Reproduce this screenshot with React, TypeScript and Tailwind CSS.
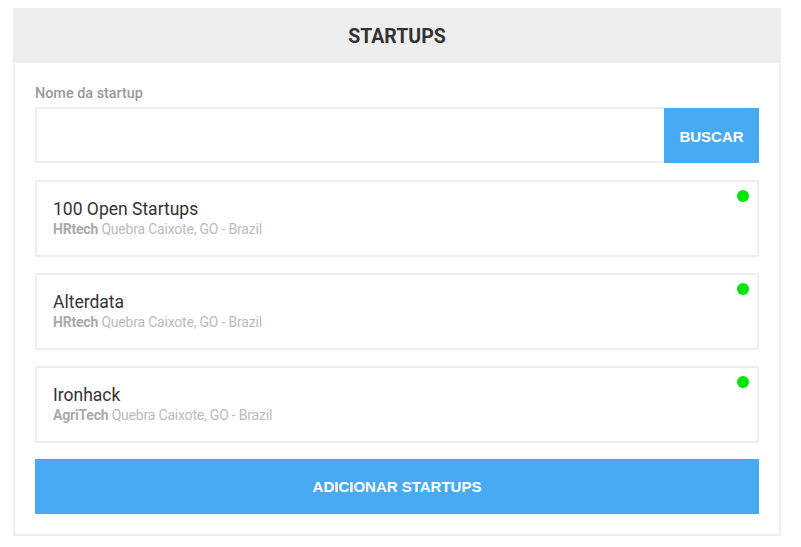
import React from "react";

const items = [
  { name: "100 Open Startups", tag: "HRtech", place: "Quebra Caixote, GO - Brazil" },
  { name: "Alterdata", tag: "HRtech", place: "Quebra Caixote, GO - Brazil" },
  { name: "Ironhack", tag: "AgriTech", place: "Quebra Caixote, GO - Brazil" },
];

export default function App() {
  return (
    <div className="w-[801px] h-[547px] bg-white pt-2 pl-[13px]" style={{ fontFamily: "Roboto, sans-serif" }}>
      <div className="w-[768px] h-[528px] border-2 border-[#eeeeee] flex flex-col">
        <div className="h-[55px] bg-[#eeeeee] flex items-center justify-center -mt-[2px] -mx-[2px] pt-[2px]">
          <h1 className="text-[19.5px] font-bold text-[#333333]">STARTUPS</h1>
        </div>
        <div className="flex flex-col px-5 pt-[23px]">
          <label className="text-[14.4px] font-medium text-[#999999] leading-[16px]">Nome da startup</label>
          <div className="flex mt-[5px] h-[56px]">
            <div className="flex-1 border-2 border-[#eeeeee] border-r-0"></div>
            <button
              className="w-[95px] h-[55px] mt-[1px] pt-[3px] bg-[#47aaf2] text-white text-[15px] font-bold"
              style={{ fontFamily: '"Liberation Sans", Arial, sans-serif' }}
            >
              BUSCAR
            </button>
          </div>
          <div className="flex flex-col gap-4 mt-[17px]">
            {items.map((it) => (
              <div key={it.name} className="relative h-[77px] border-2 border-[#eeeeee] pl-4 pt-[16px]">
                <div className="text-[17.5px] text-[#333333] leading-[22px]">{it.name}</div>
                <div className="text-[14px] leading-[18px] text-[#bbbbbb] tracking-[-0.2px]">
                  <span className="font-bold text-[#aaaaaa]">{it.tag}</span> {it.place}
                </div>
                <span className="absolute top-[8px] right-[8px] w-3 h-3 rounded-full bg-[#00e600]"></span>
              </div>
            ))}
          </div>
          <button
            className="mt-4 h-[55px] pt-[2px] bg-[#47aaf2] text-white text-[15px] font-bold"
            style={{ fontFamily: '"Liberation Sans", Arial, sans-serif' }}
          >
            ADICIONAR STARTUPS
          </button>
        </div>
      </div>
    </div>
  );
}
